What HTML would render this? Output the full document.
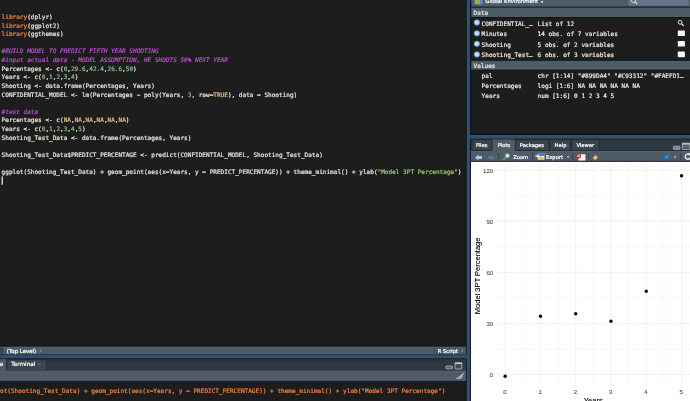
<!DOCTYPE html>
<html lang="en">
<head>
<meta charset="utf-8">
<title>RStudio</title>
<style>
html,body{margin:0;padding:0;}
body{width:690px;height:401px;overflow:hidden;background:#1d1d1d;position:relative;font-family:"Liberation Sans",sans-serif;}
#root{position:absolute;left:0;top:0;width:690px;height:401px;overflow:hidden;will-change:transform;}
#bg{position:absolute;left:0;top:0;display:block;}
#root div{position:absolute;white-space:pre;}
#editor{left:0;top:0;width:466px;height:347px;overflow:hidden;}
#console{left:0;top:381px;width:466px;height:20px;overflow:hidden;}
.ln,.ev{font-family:"DejaVu Sans Mono","Liberation Mono",monospace;}
.ln{left:1.6px;height:8.61px;line-height:8.61px;font-size:6.07px;color:#e9e5e0;-webkit-text-stroke:0.2px;}
.k{color:#ee8344;}
.c{color:#b94fd0;font-style:italic;}
.n{color:#80c286;}
.s{color:#96c868;}
.l{color:#e1c582;}
.ev{height:10px;line-height:10px;font-size:6.07px;color:#eeeae4;-webkit-text-stroke:0.2px;}
.ui{font-family:"DejaVu Sans","Liberation Sans",sans-serif;font-size:5.2px;color:#fff;height:8px;line-height:8px;-webkit-text-stroke:0.22px;}
</style>
</head>
<body>
<div id="root">
<svg id="bg" width="690" height="401" viewBox="0 0 690 401" font-family="Liberation Sans, sans-serif">
<defs>
<radialGradient id="gd" cx="0.5" cy="0.5" r="0.5"><stop offset="0" stop-color="#eef5fc"/><stop offset="0.35" stop-color="#c4dbf1"/><stop offset="0.7" stop-color="#9cc0e6"/><stop offset="0.88" stop-color="#5f90c8"/><stop offset="1" stop-color="#3d6ea6"/></radialGradient>
<linearGradient id="gt" x1="0" x2="0" y1="0" y2="1"><stop offset="0" stop-color="#28313a"/><stop offset="0.3" stop-color="#2f3941"/><stop offset="1" stop-color="#2f3941"/></linearGradient>
</defs>
<rect x="0" y="0" width="690" height="401" fill="#1d1d1d"/>
<rect x="1.5" y="176.3" width="1.5" height="8.5" fill="#cdc9c4"/>
<rect x="465.6" y="0" width="6.2" height="135" fill="#0d1923"/>
<rect x="465.6" y="134" width="5.4" height="267" fill="#0d1923"/>
<rect x="469.9" y="134" width="1.1" height="267" fill="#101f31"/>
<rect x="466.85" y="0" width="3.05" height="401" fill="#38506a"/>
<rect x="0" y="345.2" width="466" height="1.8" fill="#12171c"/>
<rect x="0" y="346.8" width="466.0" height="7.3" fill="#4e5c68"/>
<rect x="0" y="346.8" width="466.0" height="0.7" fill="#5b6975"/>
<rect x="0" y="347.4" width="2.6" height="6.7" fill="#3b4854"/>
<rect x="2.6" y="347.4" width="0.5" height="6.7" fill="#2c3640"/>
<rect x="434.2" y="347.4" width="31.8" height="6.7" fill="#4b5965"/>
<rect x="433.8" y="347.4" width="0.5" height="6.7" fill="#2f3a45"/>
<rect x="0" y="354.0" width="468" height="4.4" fill="#334f6b"/>
<rect x="0" y="354.0" width="467" height="1.3" fill="#273e57"/>
<rect x="0" y="358.3" width="466" height="1.1" fill="#1d2833"/>
<rect x="0" y="359.2" width="466.0" height="11.6" fill="url(#gt)"/>
<rect x="0" y="359.2" width="5.8" height="11.6" fill="#4e5c68"/>
<rect x="6.9" y="359.8" width="39.6" height="11.0" fill="#38444e" stroke="#1e262e" stroke-width="0.6"/>
<rect x="0" y="370.8" width="466.0" height="10.3" fill="#4e5c68"/>
<rect x="0" y="370.8" width="466.0" height="0.6" fill="#586673"/>
<rect x="0" y="380.9" width="466.0" height="0.7" fill="#141a20"/>
<rect x="471.3" y="0" width="218.7" height="6.7" fill="#4e5c68"/>
<rect x="471.3" y="6.6" width="218.7" height="1.5" fill="#27323d"/>
<rect x="471.3" y="8.1" width="218.7" height="9.0" fill="#4e5c68"/>
<rect x="471.3" y="8.1" width="218.7" height="0.6" fill="#586673"/>
<rect x="471.5" y="17.1" width="218.5" height="0.9" fill="#0e1317"/>
<rect x="471.5" y="59.9" width="218.5" height="0.9" fill="#0e1317"/>
<rect x="471.3" y="60.8" width="218.7" height="9.0" fill="#4e5c68"/>
<rect x="471.5" y="69.8" width="218.5" height="0.8" fill="#0e1317"/>
<rect x="628.4" y="0" width="60.4" height="5.6" fill="#64778a" rx="0.8"/>
<g transform="translate(630.4,-2.6)"><circle cx="3" cy="3" r="2.1" fill="none" stroke="#dfe5ea" stroke-width="0.9"/><path d="M4.6 4.6 L6.8 6.8" stroke="#dfe5ea" stroke-width="1.1"/></g>
<rect x="474.7" y="-4" width="5.4" height="8.3" fill="#8fb05a"/>
<rect x="480.1" y="-4" width="2.3" height="8.3" fill="#6a86c8"/>
<circle cx="476.9" cy="22.5" r="3.15" fill="url(#gd)"/>
<circle cx="476.9" cy="33.3" r="3.15" fill="url(#gd)"/>
<circle cx="476.9" cy="43.8" r="3.15" fill="url(#gd)"/>
<circle cx="476.9" cy="54.4" r="3.15" fill="url(#gd)"/>
<g transform="translate(677.4,19.6) scale(0.9)"><circle cx="3" cy="3" r="2.1" fill="none" stroke="#f0f0f0" stroke-width="1.05"/><path d="M4.6 4.6 L7 7" stroke="#f0f0f0" stroke-width="1.3"/></g>
<rect x="677.8" y="30.4" width="7.1" height="5.7" fill="#f6f6f6" rx="0.7"/>
<rect x="677.8" y="40.9" width="7.1" height="5.7" fill="#f6f6f6" rx="0.7"/>
<rect x="677.8" y="51.5" width="7.1" height="5.7" fill="#f6f6f6" rx="0.7"/>
<rect x="470.5" y="133.5" width="219.5" height="1.4" fill="#0d1419"/>
<rect x="468.5" y="135.0" width="221.5" height="3.8" fill="#334f6b"/>
<rect x="471" y="138.8" width="219" height="0.9" fill="#1a2733"/>
<rect x="471" y="139.3" width="219" height="11.3" fill="url(#gt)"/>
<rect x="472.0" y="139.9" width="19.7" height="10.7" fill="#38444e" stroke="#1e262e" stroke-width="0.6"/>
<rect x="515.4" y="139.9" width="33.6" height="10.7" fill="#38444e" stroke="#1e262e" stroke-width="0.6"/>
<rect x="550.0" y="139.9" width="20.8" height="10.7" fill="#38444e" stroke="#1e262e" stroke-width="0.6"/>
<rect x="571.8" y="139.9" width="27.4" height="10.7" fill="#38444e" stroke="#1e262e" stroke-width="0.6"/>
<g transform="translate(672.6,142.6)"><rect x="0.7" y="3.6" width="6.8" height="3.2" rx="0.9" fill="#76828d" stroke="#aeb8c1" stroke-width="0.7"/><rect x="9.8" y="0.6" width="7.4" height="6.3" rx="0.5" fill="#46515c" stroke="#b4bdc5" stroke-width="0.8"/><rect x="9.8" y="0.4" width="7.4" height="1.7" fill="#b9c2ca"/><rect x="10.2" y="3.6" width="6.6" height="0.6" fill="#8d98a3"/></g>
<rect x="470.9" y="150.4" width="219.1" height="0.8" fill="#222c36"/>
<rect x="470.9" y="151.1" width="219.1" height="9.7" fill="#4e5c68"/>
<rect x="470.9" y="151.1" width="219.1" height="0.7" fill="#596773"/>
<rect x="470.9" y="160.2" width="219.1" height="0.6" fill="#5b6874"/>
<rect x="492.6" y="139.5" width="22.2" height="12.2" fill="#4e5c68"/>
<rect x="470.9" y="160.8" width="219.1" height="1.1" fill="#1d252d"/>
<rect x="498.1" y="153" width="0.6" height="7" fill="#2a343e"/>
<rect x="532.3" y="153" width="0.6" height="7" fill="#2a343e"/>
<rect x="572.5" y="153" width="0.6" height="7" fill="#2a343e"/>
<rect x="588.0" y="153" width="0.6" height="7" fill="#2a343e"/>
<rect x="680.0" y="153" width="0.6" height="7" fill="#2a343e"/>
<g transform="translate(475,154.5)"><path d="M0 3 L3.4 0 L3.4 1.5 L7 1.5 L7 4.5 L3.4 4.5 L3.4 6 Z" fill="#a3c8ec"/><path d="M20 3 L16.6 0 L16.6 1.5 L13 1.5 L13 4.5 L16.6 4.5 L16.6 6 Z" fill="#647585"/></g>
<g transform="translate(502.4,152.9)"><circle cx="5" cy="2.8" r="2.2" fill="#d8ecf7" stroke="#4f9a86" stroke-width="0.9"/><path d="M3.4 4.6 L0.6 7.2" stroke="#b98d5c" stroke-width="1.2"/></g>
<g transform="translate(535.4,152.6)"><rect x="2.4" y="0.6" width="6.6" height="6.4" fill="#f2f2f2"/><rect x="2.4" y="0.6" width="6.6" height="2.8" fill="#4b78b8"/><rect x="3.2" y="4.2" width="5" height="2.2" fill="#e3c45c"/><path d="M0 2.8 L2.2 2.8 L2.2 1.6 L4.4 3.5 L2.2 5.4 L2.2 4.2 L0 4.2 Z" fill="#ffffff"/></g>
<g transform="translate(575.8,152.9)"><rect x="2.6" y="1.4" width="7" height="6.2" fill="#f6f6f6"/><circle cx="2.8" cy="3" r="2.5" fill="#c8342b"/><path d="M1.6 1.8 L4 4.2 M4 1.8 L1.6 4.2" stroke="#ffffff" stroke-width="0.8"/></g>
<g transform="translate(592.2,151.6)"><path d="M7.6 0.3 L4.6 3.8" stroke="#b0482e" stroke-width="0.8"/><path d="M0.4 6.4 L3.4 3.4 L5.6 5.6 L3.2 8.6 Z" fill="#e2c173"/><path d="M3.4 3.4 L5.6 5.6" stroke="#a98a45" stroke-width="0.8"/></g>
<g transform="translate(662.5,152.7)"><circle cx="4" cy="4" r="3.25" fill="#2b74ab"/><circle cx="4" cy="4" r="2.9" fill="none" stroke="#235f8f" stroke-width="0.7"/><path d="M2.6 4 L3.7 5.2 L5.6 3" fill="none" stroke="#7cc0e6" stroke-width="0.8"/></g>
<g transform="translate(683.8,152.4)"><path d="M5.9 2.4 A2.6 2.6 0 1 0 6.5 5.2" fill="none" stroke="#e8edf1" stroke-width="1.5"/><path d="M4.4 0.6 L7.6 1.0 L6.4 4 Z" fill="#e8edf1"/></g>
<g transform="translate(445.4,362.2)"><rect x="0.5" y="3.8" width="6.6" height="2.8" rx="0.6" fill="#56626d" stroke="#bcc5cd" stroke-width="0.7"/><rect x="9.6" y="0.6" width="6.8" height="6.2" rx="0.4" fill="#3f4a55" stroke="#bcc5cd" stroke-width="0.8"/><rect x="9.6" y="0.4" width="6.8" height="1.4" fill="#c2cad1"/></g>
<g transform="translate(455,371.6)"><path d="M0.4 7.4 L6.6 7.2 L9.5 0.5 Z" fill="#a4afb9"/></g>
<rect x="471.0" y="161.9" width="219.0" height="239.1" fill="#ffffff"/>
<g stroke="#efefef" stroke-width="0.55">
<line x1="522.79" y1="163.7" x2="522.79" y2="385.2"/>
<line x1="558.07" y1="163.7" x2="558.07" y2="385.2"/>
<line x1="593.35" y1="163.7" x2="593.35" y2="385.2"/>
<line x1="628.63" y1="163.7" x2="628.63" y2="385.2"/>
<line x1="663.91" y1="163.7" x2="663.91" y2="385.2"/>
<line x1="495.8" y1="348.89" x2="690" y2="348.89"/>
<line x1="495.8" y1="297.86" x2="690" y2="297.86"/>
<line x1="495.8" y1="246.84" x2="690" y2="246.84"/>
<line x1="495.8" y1="195.82" x2="690" y2="195.82"/>
</g>
<g stroke="#ebebeb" stroke-width="0.72">
<line x1="505.15" y1="163.7" x2="505.15" y2="385.2"/>
<line x1="540.43" y1="163.7" x2="540.43" y2="385.2"/>
<line x1="575.71" y1="163.7" x2="575.71" y2="385.2"/>
<line x1="610.99" y1="163.7" x2="610.99" y2="385.2"/>
<line x1="646.27" y1="163.7" x2="646.27" y2="385.2"/>
<line x1="681.55" y1="163.7" x2="681.55" y2="385.2"/>
<line x1="495.8" y1="374.4" x2="690" y2="374.4"/>
<line x1="495.8" y1="323.38" x2="690" y2="323.38"/>
<line x1="495.8" y1="272.35" x2="690" y2="272.35"/>
<line x1="495.8" y1="221.33" x2="690" y2="221.33"/>
<line x1="495.8" y1="170.3" x2="690" y2="170.3"/>
</g>
<g fill="#000000">
<circle cx="505.15" cy="376.2" r="1.7"/>
<circle cx="540.43" cy="316.3" r="1.7"/>
<circle cx="575.71" cy="313.7" r="1.7"/>
<circle cx="610.99" cy="321.3" r="1.7"/>
<circle cx="646.27" cy="291.3" r="1.7"/>
<circle cx="681.55" cy="175.8" r="1.7"/>
</g>
<g font-size="6" fill="#4d4d4d" text-anchor="end" stroke="#4d4d4d" stroke-width="0.1">
<text x="493.1" y="376.6">0</text>
<text x="493.1" y="325.58">30</text>
<text x="493.1" y="274.55">60</text>
<text x="493.1" y="223.53">90</text>
<text x="493.1" y="172.5">120</text>
</g>
<g font-size="6" fill="#4d4d4d" text-anchor="middle" stroke="#4d4d4d" stroke-width="0.1">
<text x="504.85" y="393.9">0</text>
<text x="540.13" y="393.9">1</text>
<text x="575.41" y="393.9">2</text>
<text x="610.69" y="393.9">3</text>
<text x="645.97" y="393.9">4</text>
<text x="681.25" y="393.9">5</text>
</g>
<text x="593.2" y="402.6" font-size="7.5" fill="#000000" stroke="#000" stroke-width="0.12" text-anchor="middle">Years</text>
<text transform="translate(480.2,275.9) rotate(-90)" font-size="7.5" fill="#000000" stroke="#000" stroke-width="0.12" text-anchor="middle">Model 3PT Percentage</text>
</svg>
<div id="editor">
<div class="ln" style="top:13.0px;"><span class="k">library</span>(dplyr)</div>
<div class="ln" style="top:21.6px;"><span class="k">library</span>(ggplot2)</div>
<div class="ln" style="top:30.2px;"><span class="k">library</span>(ggthemes)</div>
<div class="ln c" style="top:47.4px;">#BUILD MODEL TO PREDICT FIFTH YEAR SHOOTING</div>
<div class="ln c" style="top:56.0px;">#input actual data - MODEL ASSUMPTION, HE SHOOTS 50% NEXT YEAR</div>
<div class="ln" style="top:64.7px;">Percentages &lt;- c(<span class="n">0</span>,<span class="n">29.6</span>,<span class="n">42.4</span>,<span class="n">26.6</span>,<span class="n">50</span>)</div>
<div class="ln" style="top:73.3px;">Years &lt;- c(<span class="n">0</span>,<span class="n">1</span>,<span class="n">2</span>,<span class="n">3</span>,<span class="n">4</span>)</div>
<div class="ln" style="top:81.9px;">Shooting &lt;- data.frame(Percentages, Years)</div>
<div class="ln" style="top:90.5px;">CONFIDENTIAL_MODEL &lt;- lm(Percentages ~ poly(Years, <span class="n">3</span>, raw=<span class="l">TRUE</span>), data = Shooting)</div>
<div class="ln c" style="top:107.7px;">#test data</div>
<div class="ln" style="top:116.3px;">Percentages &lt;- c(<span class="l">NA</span>,<span class="l">NA</span>,<span class="l">NA</span>,<span class="l">NA</span>,<span class="l">NA</span>,<span class="l">NA</span>)</div>
<div class="ln" style="top:124.9px;">Years &lt;- c(<span class="n">0</span>,<span class="n">1</span>,<span class="n">2</span>,<span class="n">3</span>,<span class="n">4</span>,<span class="n">5</span>)</div>
<div class="ln" style="top:133.5px;">Shooting_Test_Data &lt;- data.frame(Percentages, Years)</div>
<div class="ln" style="top:150.8px;">Shooting_Test_Data$PREDICT_PERCENTAGE &lt;- predict(CONFIDENTIAL_MODEL, Shooting_Test_Data)</div>
<div class="ln" style="top:168.0px;">ggplot(Shooting_Test_Data) + geom_point(aes(x=Years, y = PREDICT_PERCENTAGE)) + theme_minimal() + ylab(<span class="s">"Model 3PT Percentage"</span>)</div>
</div>
<div class="ui" style="left:6.7px;top:346.9px;font-size:5.45px;">(Top Level)</div>
<div class="ui" style="left:39px;top:346.7px;font-size:4px;color:#93a0ac;-webkit-text-stroke:0;">&#8597;</div>
<div class="ui" style="left:437.8px;top:346.7px;">R Script</div>
<div class="ui" style="left:460.5px;top:346.7px;font-size:4px;color:#93a0ac;-webkit-text-stroke:0;">&#8597;</div>
<div class="ui" style="left:-19.4px;top:360.3px;font-size:5.7px;">Console</div>
<div class="ui" style="left:11.3px;top:360.3px;font-size:5.7px;">Terminal</div>
<div class="ui" style="left:37.2px;top:360.3px;color:#73808c;-webkit-text-stroke:0;font-size:5px;">&#215;</div>
<div id="console"><div class="ln" style="left:-14.6px;top:5.8px;color:#ee8344;">ggplot(Shooting_Test_Data) + geom_point(aes(x=Years, y = PREDICT_PERCENTAGE)) + theme_minimal() + ylab("Model 3PT Percentage")</div></div>
<div class="ui" style="left:485.3px;top:-3.5px;font-size:5.35px;">Global Environment</div>
<div class="ui" style="left:541.2px;top:-2.2px;font-size:3.6px;">&#9662;</div>
<div class="ev" style="left:473.6px;top:8.1px;height:9px;line-height:9px;">Data</div>
<div class="ev" style="left:473.6px;top:61px;height:9px;line-height:9px;">Values</div>
<div class="ev" style="left:481.6px;top:18.7px;">CONFIDENTIAL_…</div>
<div class="ev" style="left:537.6px;top:18.7px;">List of 12</div>
<div class="ev" style="left:481.6px;top:29.3px;">Minutes</div>
<div class="ev" style="left:537.6px;top:29.3px;">14 obs. of 7 variables</div>
<div class="ev" style="left:481.6px;top:39.8px;">Shooting</div>
<div class="ev" style="left:537.6px;top:39.8px;">5 obs. of 2 variables</div>
<div class="ev" style="left:481.6px;top:50.3px;">Shooting_Test…</div>
<div class="ev" style="left:537.6px;top:50.3px;">6 obs. of 3 variables</div>
<div class="ev" style="left:481.6px;top:71.3px;">pal</div>
<div class="ev" style="left:537.6px;top:71.3px;">chr [1:14] "#899DA4" "#C93312" "#FAEFD1…</div>
<div class="ev" style="left:481.6px;top:81.2px;">Percentages</div>
<div class="ev" style="left:537.6px;top:81.2px;">logi [1:6] NA NA NA NA NA NA</div>
<div class="ev" style="left:481.6px;top:91.2px;">Years</div>
<div class="ev" style="left:537.6px;top:91.2px;">num [1:6] 0 1 2 3 4 5</div>
<div class="ui" style="left:476.0px;top:140.8px;">Files</div>
<div class="ui" style="left:497.8px;top:140.8px;">Plots</div>
<div class="ui" style="left:519.8px;top:140.8px;">Packages</div>
<div class="ui" style="left:554.6px;top:140.8px;">Help</div>
<div class="ui" style="left:576.4px;top:140.8px;">Viewer</div>
<div class="ui" style="left:513.2px;top:152.8px;">Zoom</div>
<div class="ui" style="left:546.0px;top:152.8px;">Export</div>
<div class="ui" style="left:567.2px;top:153px;font-size:3.4px;color:#c4ccd4;">&#9662;</div>
<div class="ui" style="left:674.2px;top:153.1px;font-size:3.2px;color:#d0d6dc;">&#9662;</div>
</div>
</body>
</html>
